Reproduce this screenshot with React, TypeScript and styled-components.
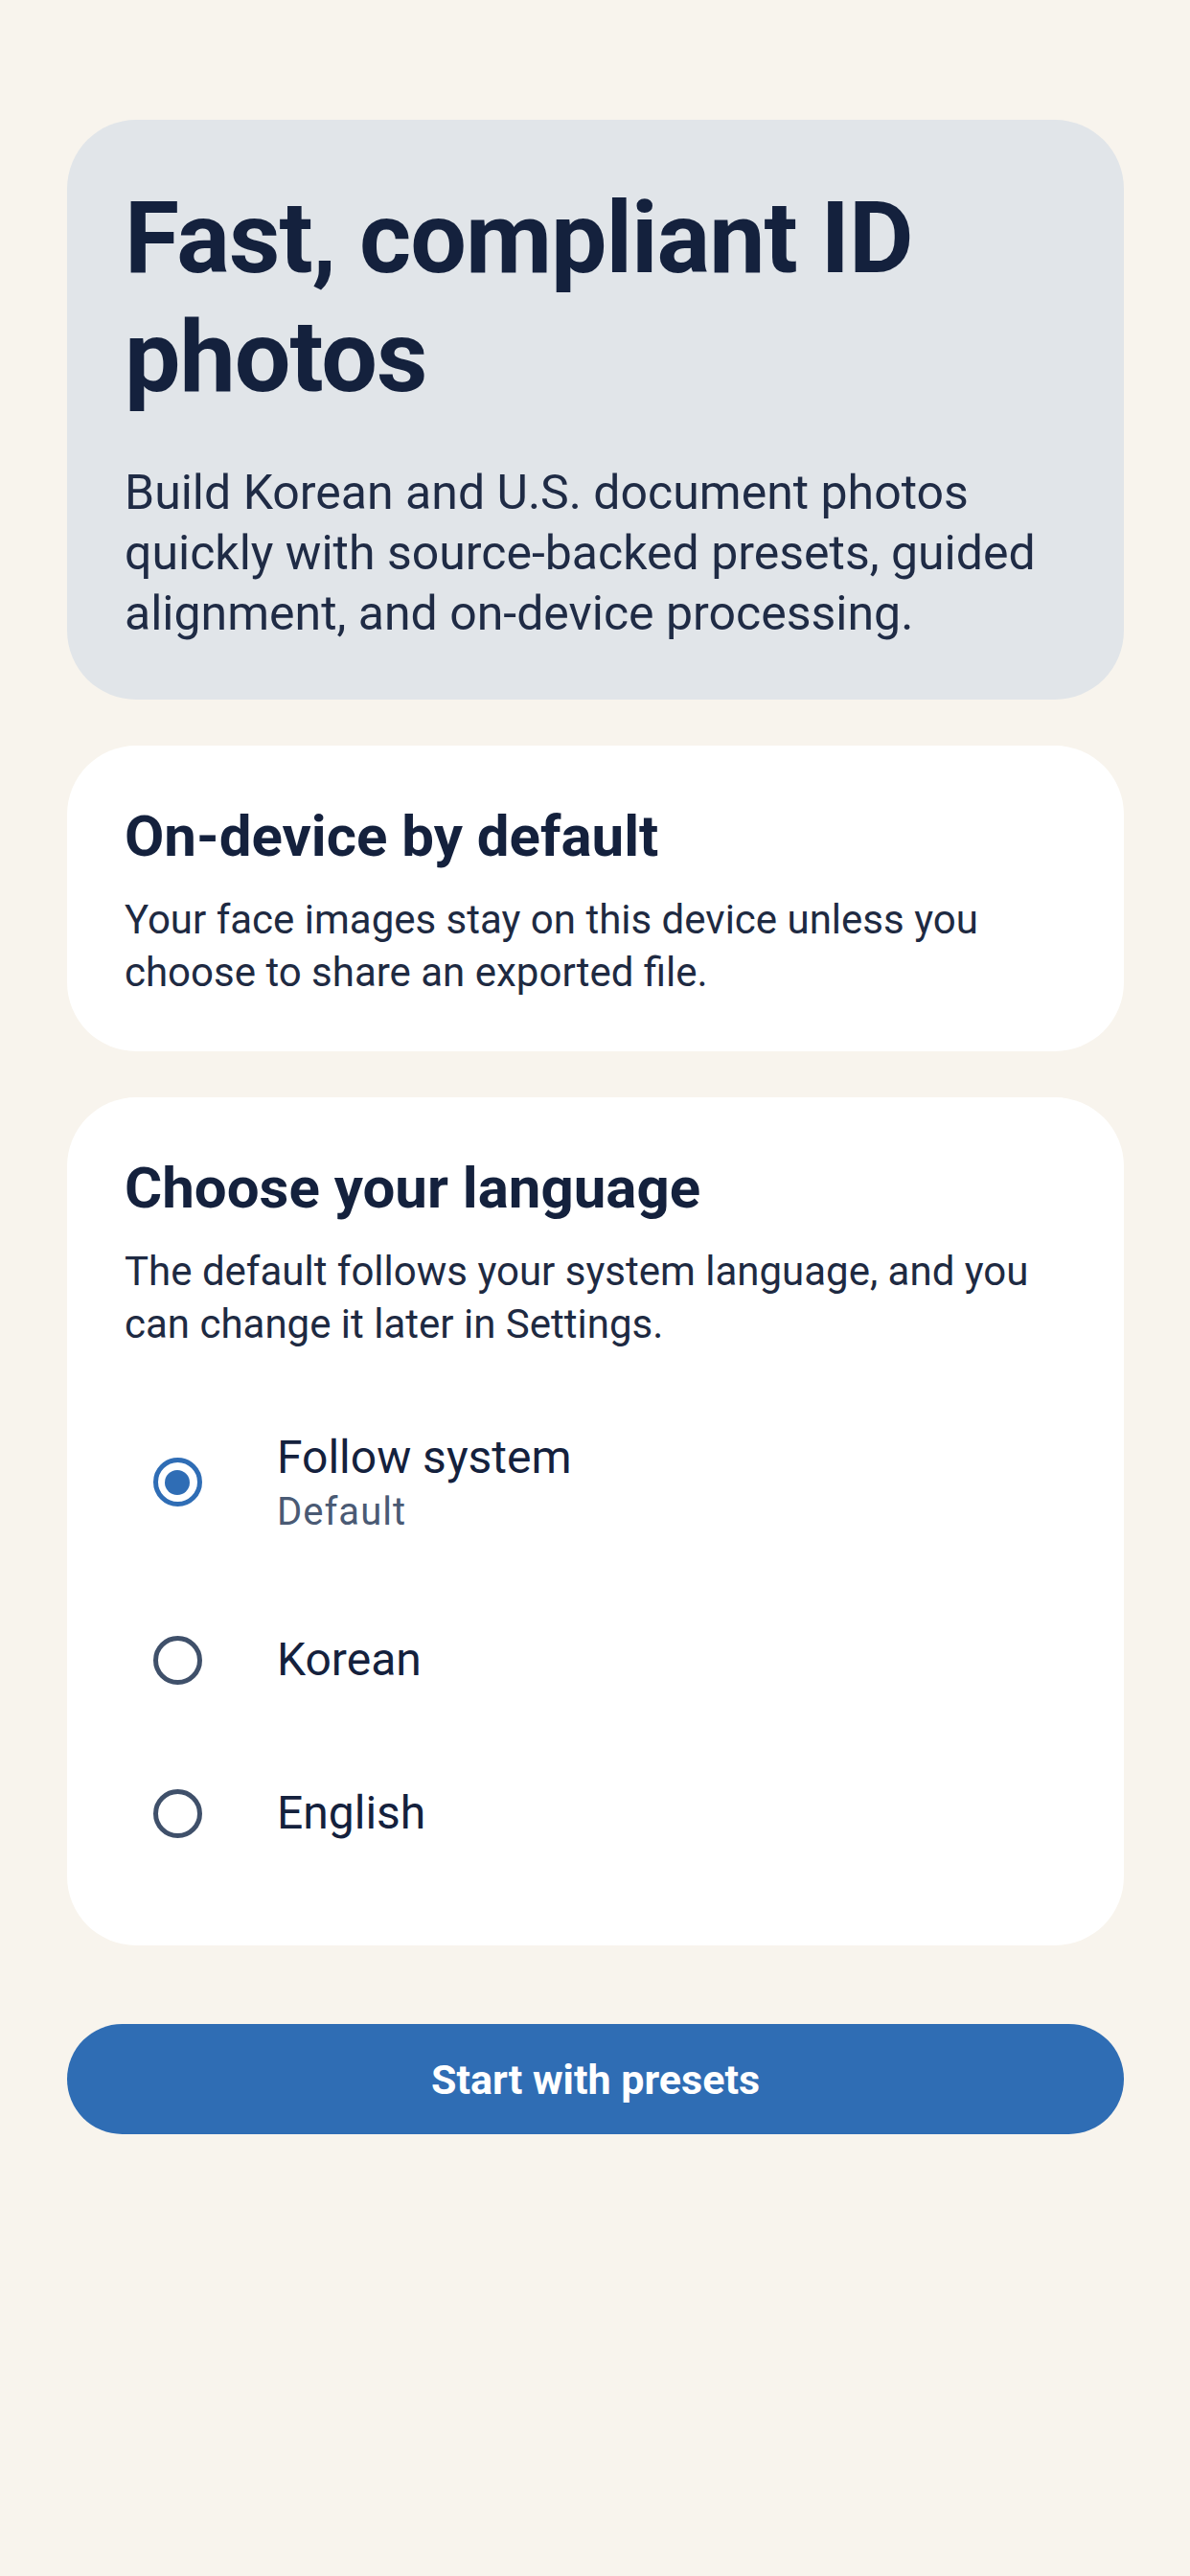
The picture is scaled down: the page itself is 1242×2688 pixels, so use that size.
import React, { useState } from 'react';
import styled, { createGlobalStyle } from 'styled-components';

const GlobalStyle = createGlobalStyle`
  * {
    box-sizing: border-box;
  }

  html,
  body {
    margin: 0;
    padding: 0;
    background: #f8f4ed;
  }

  body {
    font-family: Roboto, "Noto Sans", "Liberation Sans", sans-serif;
    color: #14213d;
    -webkit-font-smoothing: antialiased;
  }
`;

const Page = styled.main`
  min-height: 2688px;
  padding: 125px 69px 0 70px;
  display: flex;
  flex-direction: column;
  gap: 48px;
`;

const Card = styled.section<{ $tone?: 'hero' | 'plain' }>`
  background: ${p => (p.$tone === 'hero' ? '#e1e5e9' : '#ffffff')};
  border-radius: 72px;
  padding: ${p => (p.$tone === 'hero' ? '62px 60px 58px' : '57px 60px 55px')};
`;

const HeroTitle = styled.h1`
  margin: 0;
  font-size: 104px;
  line-height: 124px;
  font-weight: 700;
  letter-spacing: -1px;
  color: #14213d;
`;

const HeroText = styled.p`
  margin: 48px 0 0;
  font-size: 50px;
  line-height: 63px;
  font-weight: 400;
  color: #1f2b45;
`;

const CardTitle = styled.h2`
  margin: 0;
  font-size: 60px;
  line-height: 75px;
  font-weight: 700;
  color: #14213d;
`;

const CardText = styled.p`
  margin: 22px 0 0;
  font-size: 42px;
  line-height: 55px;
  color: #1e2a42;
`;

const OptionList = styled.div`
  margin: 32px 0 3px;
  display: flex;
  flex-direction: column;
`;

const OptionRow = styled.button`
  display: flex;
  align-items: center;
  gap: 49px;
  width: 100%;
  padding: 49px 0;
  margin: 0;
  border: 0;
  background: transparent;
  font: inherit;
  color: inherit;
  text-align: left;
  cursor: pointer;
`;

const RadioSlot = styled.span`
  width: 110px;
  flex: none;
  display: flex;
  justify-content: center;
`;

const RadioMark = styled.span<{ $checked: boolean }>`
  width: 51px;
  height: 51px;
  border-radius: 50%;
  border: 5px solid ${p => (p.$checked ? '#2f6db5' : '#3f506a')};
  display: flex;
  align-items: center;
  justify-content: center;

  &::after {
    content: '';
    width: 26px;
    height: 26px;
    border-radius: 50%;
    background: #2f6db5;
    display: ${p => (p.$checked ? 'block' : 'none')};
  }
`;

const OptionLabel = styled.span`
  display: flex;
  flex-direction: column;
`;

const OptionName = styled.span`
  font-size: 48px;
  line-height: 62px;
  color: #14213d;
`;

const OptionHint = styled.span`
  font-size: 40px;
  line-height: 51px;
  letter-spacing: 1px;
  color: #4a5a74;
`;

const PrimaryButton = styled.button`
  margin-top: 34px;
  height: 115px;
  width: 100%;
  border: 0;
  border-radius: 58px;
  background: #2f6db4;
  color: #ffffff;
  font-family: inherit;
  font-size: 43px;
  font-weight: 700;
  cursor: pointer;
`;

const languages = [
  { id: 'system', name: 'Follow system', hint: 'Default' },
  { id: 'ko', name: 'Korean' },
  { id: 'en', name: 'English' },
];

const App = () => {
  const [lang, setLang] = useState('system');

  return (
    <>
      <GlobalStyle />
      <Page>
        <Card $tone="hero">
          <HeroTitle>Fast, compliant ID photos</HeroTitle>
          <HeroText>
            Build Korean and U.S. document photos quickly with source-backed presets, guided
            alignment, and on-device processing.
          </HeroText>
        </Card>

        <Card>
          <CardTitle>On-device by default</CardTitle>
          <CardText>
            Your face images stay on this device unless you choose to share an exported file.
          </CardText>
        </Card>

        <Card>
          <CardTitle>Choose your language</CardTitle>
          <CardText>
            The default follows your system language, and you can change it later in Settings.
          </CardText>
          <OptionList role="radiogroup">
            {languages.map(l => (
              <OptionRow
                key={l.id}
                role="radio"
                aria-checked={lang === l.id}
                onClick={() => setLang(l.id)}
              >
                <RadioSlot>
                  <RadioMark $checked={lang === l.id} />
                </RadioSlot>
                <OptionLabel>
                  <OptionName>{l.name}</OptionName>
                  {l.hint && <OptionHint>{l.hint}</OptionHint>}
                </OptionLabel>
              </OptionRow>
            ))}
          </OptionList>
        </Card>

        <PrimaryButton>Start with presets</PrimaryButton>
      </Page>
    </>
  );
};

export default App;
